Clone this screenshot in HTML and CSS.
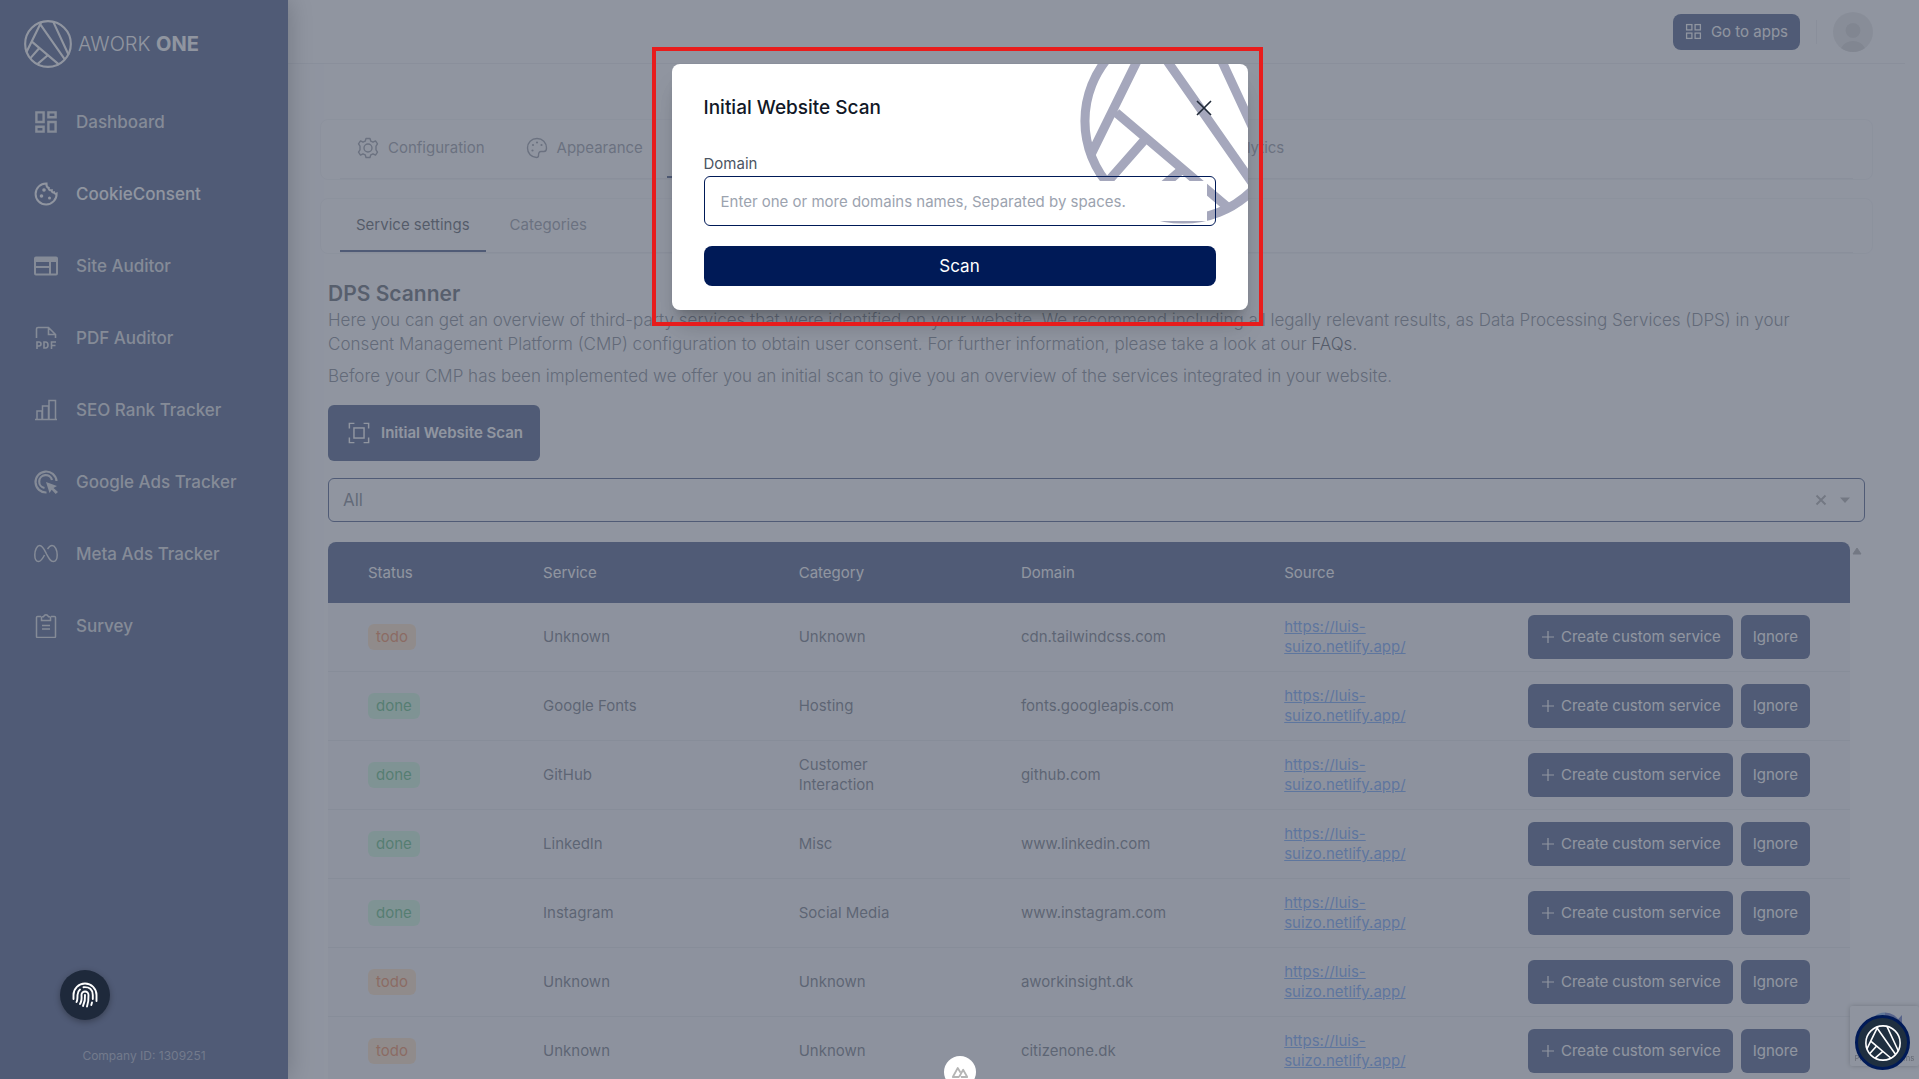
FILE: index.html
```html
<!DOCTYPE html>
<html lang="en">
<head>
  <meta charset="utf-8">
  <title>Awork One - DPS Scanner</title>
  <meta name="viewport" content="width=device-width, initial-scale=1">
  <link rel="stylesheet" href="styles.css">
</head>
<body>
  <!-- shared shapes -->
  <svg class="sprite" aria-hidden="true">
    <symbol id="logo" viewBox="0 0 100 100">
      <g fill="none" stroke="currentColor" stroke-width="4.400">
        <circle cx="50" cy="50" r="47.600"/>
        <path d="M36 4L5 67M34 9l51 73M61 4l32 69M17.600 46L73 93M31.500 59L13 80M49.500 73.500L28 92"/>
      </g>
    </symbol>
    <symbol id="plus" viewBox="0 0 16 16">
      <path d="M8 2v12M2 8h12" fill="none" stroke="currentColor" stroke-width="1.200"/>
    </symbol>
  </svg>

  <div class="layout">
    <aside class="sidebar">
      <a class="brand" href="#">
        <svg class="brand-logo"><use href="#logo"/></svg>
        <span>AWORK <b>ONE</b></span>
      </a>
      <nav class="menu">
        <a href="#">
          <svg viewBox="2 2 20 20"><path fill="currentColor" d="M19 5v2h-4V5h4M9 5v6H5V5h4m10 8v6h-4v-6h4M9 17v2H5v-2h4M21 3h-8v6h8V3zM11 3H3v10h8V3zm10 8h-8v10h8V11zm-10 4H3v6h8v-6z"/></svg>
          Dashboard
        </a>
        <a href="#" class="active">
          <svg viewBox="0 0 24 24" fill="none" stroke="currentColor" stroke-width="2"><path d="M12.500 1.500A10.500 10.500 0 1 0 22.600 11.500c-1 .6-2.300.1-2.600-1.200-1.500.5-2.500-.5-2.200-2-2.500.3-3.300-1-3-2.300-1.500-.6-2.600-2-2.300-4.500z"/><g fill="currentColor" stroke="none"><circle cx="10" cy="8" r="1.800"/><circle cx="7.500" cy="14" r="1.800"/><circle cx="15.500" cy="16" r="1.500"/></g></svg>
          CookieConsent
        </a>
        <a href="#">
          <svg viewBox="0 0 24 24"><path fill="currentColor" fill-rule="evenodd" d="M2 2.500h20a2 2 0 0 1 2 2v15a2 2 0 0 1-2 2H2a2 2 0 0 1-2-2v-15a2 2 0 0 1 2-2zM2 8v4h13V8zm0 6v5.500h13V14zm15-6v11.500h5V8z"/></svg>
          Site Auditor
        </a>
        <a href="#">
          <svg viewBox="0 0 24 24" fill="none" stroke="currentColor" stroke-width="1.600"><path d="M2.500 12V3q0-1.500 1.500-1.500h10.500l7 7V12M14.500 1.500v7h7M3 23v-7h2q2 0 2 2t-2 2H3M10 16v6h1.500q2.500 0 2.500-3t-2.500-3zM17.500 23v-7h4.500M17.500 19.500h4"/></svg>
          PDF Auditor
        </a>
        <a href="#">
          <svg viewBox="0 0 24 24" fill="none" stroke="currentColor" stroke-width="1.500"><path d="M1 21.500h22M3 21V13h5v8M8.500 21V8h6v13M15 21V2.500h6.500V21"/></svg>
          SEO Rank Tracker
        </a>
        <a href="#">
          <svg viewBox="0 0 24 24" fill="none" stroke="currentColor" stroke-width="2.200"><path d="M12.500 22.500A10.500 10.500 0 1 1 22.500 11M10.500 18A6.500 6.500 0 1 1 18 10"/><path fill="currentColor" stroke="none" d="M12 12l11 4-3.500 2L24 22l-2.300 2-4-4.300L15.500 23z"/></svg>
          Google Ads Tracker
        </a>
        <a href="#">
          <svg viewBox="0 0 24 24" fill="none" stroke="currentColor" stroke-width="1.500"><path d="M13.500 7c1.300-2 2.700-3.500 4.500-3.500 3 0 5.200 4.500 5.200 9.500 0 4-1.700 6.500-3.900 6.500-2.800 0-4.400-3-6.800-7.500C10.300 7.500 8.700 3.500 5.800 3.500 3 3.500.8 8 .8 13c0 4 1.200 6.500 3.700 6.500 2.600 0 4-2.500 6-6.500"/></svg>
          Meta Ads Tracker
        </a>
        <a href="#">
          <svg viewBox="0 0 24 24" fill="none" stroke="currentColor" stroke-width="1.500"><path d="M7 2.500H3.500Q2.500 2.500 2.500 3.500v19q0 1 1 1h17q1 0 1-1v-19q0-1-1-1H17M7.500 6.500V3.500q0-.8 1-.8h1Q10.500.8 12 .8t2.500 1.900h1q1 0 1 .8v3zM8 11.500h8M8 15h8"/></svg>
          Survey
        </a>
      </nav>
      <p class="company">Company ID: 1309251</p>
    </aside>

    <div class="page">
      <header class="topbar">
        <button type="button" class="btn apps">
          <svg viewBox="0 0 16 16" fill="none" stroke="currentColor" stroke-width="1.200"><rect x="1.500" y="1.500" width="5" height="5"/><rect x="9.500" y="1.500" width="5" height="5"/><rect x="1.500" y="9.500" width="5" height="5"/><rect x="9.500" y="9.500" width="5" height="5"/></svg>
          Go to apps
        </button>
        <span class="divider"></span>
        <svg class="avatar" viewBox="0 0 40 40"><circle cx="20" cy="20" r="20" fill="#e0e0e0"/><circle cx="20" cy="18.500" r="7.500" fill="#c2c2c2"/><path d="M8 36q4-7 12-7t12 7a20 20 0 0 1-24 0z" fill="#c2c2c2"/></svg>
      </header>

      <main class="content">
        <nav class="card tabs-main">
          <div class="tabs">
            <a href="#">
              <svg viewBox="0 0 24 24" fill="none" stroke="currentColor" stroke-width="1.400"><circle cx="12" cy="12" r="4"/><path d="M10 2.500h4l.8 2.700 2.200 1 2.500-1.300 2 3-1.500 2.300v3.600l1.500 2.300-2 3-2.500-1.300-2.200 1-.8 2.700h-4l-.8-2.700-2.200-1-2.500 1.300-2-3L4 13.800v-3.600L2.500 7.900l2-3L7 6.200l2.200-1z" stroke-linejoin="round"/></svg>
              Configuration
            </a>
            <a href="#">
              <svg viewBox="0 0 24 24" fill="none" stroke="currentColor" stroke-width="1.400"><path d="M12 2.500C6.500 2.500 2.500 6.500 2.500 12s4 9.500 9 9.500c1.500 0 2-1 2-2 0-1.500 0-4 2.500-4h3c1.700 0 2.500-1.500 2.500-3.500 0-5.500-4-9.500-9.500-9.500z"/><g fill="currentColor" stroke="none"><circle cx="8" cy="9" r="1.100"/><circle cx="12" cy="6.500" r="1.100"/><circle cx="16.500" cy="9" r="1.100"/><circle cx="7.500" cy="14.500" r="1.100"/></g></svg>
              Appearance
            </a>
            <a href="#" class="active">
              <svg viewBox="0 0 24 24" fill="none" stroke="currentColor" stroke-width="1.400"><rect x="3" y="3" width="18" height="18" rx="2"/></svg>
              Service Settings
            </a>
            <a href="#">
              <svg viewBox="0 0 24 24" fill="none" stroke="currentColor" stroke-width="1.400"><path d="M8 6l-6 6 6 6M16 6l6 6-6 6"/></svg>
              Implementation
            </a>
            <a href="#">
              <svg viewBox="0 0 24 24" fill="none" stroke="currentColor" stroke-width="1.400"><circle cx="12" cy="12" r="9"/></svg>
              Contents
            </a>
            <a href="#">
              <svg viewBox="0 0 24 24" fill="none" stroke="currentColor" stroke-width="1.400"><path d="M4 20V10M12 20V4M20 20v-7"/></svg>
              Analytics
            </a>
          </div>
        </nav>

        <nav class="card tabs-sub">
          <div class="tabs">
            <a href="#" class="active">Service settings</a>
            <a href="#">Categories</a>
          </div>
        </nav>

        <section class="scanner">
          <h1>DPS Scanner</h1>
          <p>Here you can get an overview of third-party services that were identified on your website. We recommend including all legally relevant results, as Data Processing Services (DPS) in your Consent Management Platform (CMP) configuration to obtain user consent. For further information, please take a look at our <a href="#">FAQs.</a></p>
          <p>Before your CMP has been implemented we offer you an initial scan to give you an overview of the services integrated in your website.</p>

          <button type="button" class="btn scan-open">
            <svg viewBox="0 0 24 24" fill="none" stroke="currentColor" stroke-width="1.600"><path d="M1.500 7V1.500H7M17 1.500h5.500V7M22.500 17v5.500H17M7 22.500H1.500V17"/><rect x="6.500" y="6.500" width="11" height="11"/></svg>
            Initial Website Scan
          </button>

          <div class="filter">
            <select aria-label="Status filter">
              <option>All</option>
              <option>todo</option>
              <option>done</option>
            </select>
            <span class="filter-icons">
              <svg viewBox="0 0 12 12"><path d="M1.500 1.500l9 9M10.500 1.500l-9 9" stroke="currentColor" stroke-width="2"/></svg>
              <svg viewBox="0 0 12 12"><path d="M1 3.500h10L6 9z" fill="currentColor"/></svg>
            </span>
          </div>

          <div class="table-wrap">
            <table>
              <thead>
                <tr>
                  <th class="c-status">Status</th>
                  <th class="c-service">Service</th>
                  <th class="c-category">Category</th>
                  <th class="c-domain">Domain</th>
                  <th class="c-source">Source</th>
                  <th></th>
                </tr>
              </thead>
              <tbody>
                <tr>
                  <td><span class="tag todo">todo</span></td>
                  <td>Unknown</td>
                  <td>Unknown</td>
                  <td>cdn.tailwindcss.com</td>
                  <td><a href="#">https://luis-suizo.netlify.app/</a></td>
                  <td><div class="actions"><button type="button" class="btn"><svg><use href="#plus"/></svg>Create custom service</button><button type="button" class="btn">Ignore</button></div></td>
                </tr>
                <tr>
                  <td><span class="tag done">done</span></td>
                  <td>Google Fonts</td>
                  <td>Hosting</td>
                  <td>fonts.googleapis.com</td>
                  <td><a href="#">https://luis-suizo.netlify.app/</a></td>
                  <td><div class="actions"><button type="button" class="btn"><svg><use href="#plus"/></svg>Create custom service</button><button type="button" class="btn">Ignore</button></div></td>
                </tr>
                <tr>
                  <td><span class="tag done">done</span></td>
                  <td>GitHub</td>
                  <td>Customer Interaction</td>
                  <td>github.com</td>
                  <td><a href="#">https://luis-suizo.netlify.app/</a></td>
                  <td><div class="actions"><button type="button" class="btn"><svg><use href="#plus"/></svg>Create custom service</button><button type="button" class="btn">Ignore</button></div></td>
                </tr>
                <tr>
                  <td><span class="tag done">done</span></td>
                  <td>LinkedIn</td>
                  <td>Misc</td>
                  <td>www.linkedin.com</td>
                  <td><a href="#">https://luis-suizo.netlify.app/</a></td>
                  <td><div class="actions"><button type="button" class="btn"><svg><use href="#plus"/></svg>Create custom service</button><button type="button" class="btn">Ignore</button></div></td>
                </tr>
                <tr>
                  <td><span class="tag done">done</span></td>
                  <td>Instagram</td>
                  <td>Social Media</td>
                  <td>www.instagram.com</td>
                  <td><a href="#">https://luis-suizo.netlify.app/</a></td>
                  <td><div class="actions"><button type="button" class="btn"><svg><use href="#plus"/></svg>Create custom service</button><button type="button" class="btn">Ignore</button></div></td>
                </tr>
                <tr>
                  <td><span class="tag todo">todo</span></td>
                  <td>Unknown</td>
                  <td>Unknown</td>
                  <td>aworkinsight.dk</td>
                  <td><a href="#">https://luis-suizo.netlify.app/</a></td>
                  <td><div class="actions"><button type="button" class="btn"><svg><use href="#plus"/></svg>Create custom service</button><button type="button" class="btn">Ignore</button></div></td>
                </tr>
                <tr>
                  <td><span class="tag todo">todo</span></td>
                  <td>Unknown</td>
                  <td>Unknown</td>
                  <td>citizenone.dk</td>
                  <td><a href="#">https://luis-suizo.netlify.app/</a></td>
                  <td><div class="actions"><button type="button" class="btn"><svg><use href="#plus"/></svg>Create custom service</button><button type="button" class="btn">Ignore</button></div></td>
                </tr>
              </tbody>
            </table>
            <div class="scroll-track">
              <svg viewBox="0 0 10 8"><path d="M5 1l4 6H1z" fill="currentColor" stroke="currentColor" stroke-linejoin="round"/></svg>
            </div>
          </div>
        </section>
      </main>
    </div>
  </div>

  <div class="recaptcha">
    <svg viewBox="0 0 34 34" fill="none" stroke-width="7"><path d="M4 17A13 13 0 0 1 17 4" stroke="#4a90e2"/><path d="M17 4a13 13 0 0 1 12 8" stroke="#1c3aa9"/><path d="M34 3v13H22z" fill="#1c3aa9"/></svg>
    <span>Privacy - Terms</span>
  </div>

  <div class="overlay"></div>

  <!-- scan dialog -->
  <div class="modal-wrap">
    <form class="modal" role="dialog" aria-labelledby="modal-title">
      <svg class="watermark"><use href="#logo"/></svg>
      <div class="modal-head">
        <h2 id="modal-title">Initial Website Scan</h2>
        <button type="button" class="close" aria-label="Close">
          <svg viewBox="0 0 24 24"><path d="M5 5l14 14M19 5L5 19" stroke="currentColor" stroke-width="1.600"/></svg>
        </button>
      </div>
      <label for="domain">Domain</label>
      <div class="field">
        <input type="text" id="domain" name="domain" placeholder="Enter one or more domains names, Separated by spaces.">
      </div>
      <button type="submit" class="btn submit">Scan</button>
    </form>
    <div class="highlight"></div>
  </div>

  <button type="button" class="privacy" aria-label="Privacy settings">
    <svg viewBox="0 0 26 26" fill="none" stroke="currentColor" stroke-width="1.900" stroke-linecap="round"><path d="M1.500 17v-4a11.500 11.500 0 0 1 23 0v6M4.500 20q1-1.500 1-7 0-3.500 2.500-5.500M11.500 5.200q9-.7 9.300 7.800v4M8 22q2-3 1.500-9a3.500 3.500 0 0 1 7 0q.3 6-1.500 11.500M11 24q2.500-5 2-11M20 20.500l-.7 2.500"/></svg>
  </button>
  <button type="button" class="chat" aria-label="Open chat">
    <svg><use href="#logo"/></svg>
  </button>
  <button type="button" class="devtools" aria-label="Dev tools">
    <svg viewBox="0 0 20 14" fill="none" stroke="currentColor" stroke-width="2" stroke-linejoin="round"><path d="M9 12H2L7.500 2l3 5M11 12h7l-4.500-8L9 12"/></svg>
  </button>
</body>
</html>
```
FILE: styles.css
```css
* { box-sizing:border-box }
body {
  margin:0;
  height:100vh;
  overflow:hidden;
  font-family:Inter, "Open Sans", sans-serif;
  font-size:15px;
  line-height:20px;
  color:#374151;
  background:#fdfdfe
}
a { color:inherit; text-decoration:none }
h1, h2, p { margin:0 }
button { font:inherit; cursor:pointer; padding:0; border:0; background:none }
svg { display:block; flex:none }
.sprite { position:absolute; width:0; height:0 }

.btn {
  display:flex;
  align-items:center;
  justify-content:center;
  color:#fff;
  background:#001a57;
  border-radius:6px;
  white-space:nowrap
}
.layout { display:flex; height:100vh }

/* sidebar */
.sidebar {
  position:relative; /* keeps the shadow over the top bar */
  display:flex;
  flex-direction:column;
  width:288px;
  flex:none;
  color:#fff;
  background:#001a57;
  box-shadow:0 0 24px rgba(0,0,0,0.5)
}
.brand {
  display:flex;
  align-items:center;
  gap:6px;
  padding:20px 24px 0;
  font-size:20px;
  font-weight:300
}
.brand b { font-weight:700 }
.brand-logo { width:48px; height:48px }
.menu { display:flex; flex-direction:column; padding:18px 34px 0 }
.menu a {
  display:flex;
  align-items:center;
  gap:18px;
  height:72px;
  font-size:17px;
  font-weight:500;
  color:#d1d5db
}
.menu a.active { color:#fff }
.menu svg { width:24px; height:24px }
.company {
  margin-top:auto;
  padding-bottom:13px;
  font-size:12px;
  text-align:center;
  color:#8b95b0
}

/* page */
.page { flex:1; min-width:0; margin-right:14px }
.topbar {
  display:flex;
  align-items:center;
  justify-content:flex-end;
  height:64px;
  padding-right:32px;
  background:#fff;
  border-bottom:1px solid #e5e7eb
}
.apps { height:36px; padding:0 12px; gap:9px; border-radius:8px }
.apps svg { width:17px; height:17px }
.divider { width:1px; height:24px; margin:0 16px; background:#e5e7eb }
.avatar { width:40px; height:40px }

.content { padding:55px 32px 0 }
.card {
  padding:0 19px;
  background:#fff;
  border:1px solid #f0f1f4;
  border-radius:8px
}
.tabs { display:flex; gap:8px; border-bottom:1px solid #e5e7eb }
.tabs a {
  display:flex;
  align-items:center;
  gap:8px;
  padding:0 16px;
  white-space:nowrap;
  color:#6b7280;
  border-bottom:2px solid transparent
}
.tabs a.active { color:#111827; border-color:#001a57 }
.tabs svg { width:24px; height:24px }
.tabs-main { margin-bottom:18px }
.tabs-main a { height:58px }
.tabs-sub a { height:53px }

/* scanner */
.scanner { padding:26px 8px 0 }
.scanner h1 { font-size:21px; line-height:28px; font-weight:600; color:#1f2937 }
.scanner p {
  margin-bottom:8px;
  padding-right:64px;
  font-size:17px;
  font-weight:300;
  line-height:24px;
  color:#4b5563
}
.scanner p a { color:#111827 }
.scan-open { height:56px; margin-top:17px; padding:0 17px 0 20px; gap:11px; font-weight:600 }
.scan-open svg { width:22px; height:22px }

.filter { position:relative; margin:17px 0 20px }
.filter select {
  display:block;
  width:100%;
  height:44px;
  padding:0 14px;
  font:inherit;
  font-size:17px;
  color:#4b5563;
  background:#fff;
  border:1px solid #001a57;
  border-radius:6px;
  appearance:none
}
.filter-icons {
  position:absolute;
  right:14px;
  top:16px;
  display:flex;
  gap:12px;
  color:#8c8c8c;
  pointer-events:none
}
.filter-icons svg { width:12px; height:12px }

.table-wrap { display:flex }
.scroll-track { width:15px; flex:none; padding:5px 2px; color:#8c8c8c }
.scroll-track svg { width:10px; height:8px }
table { width:100%; table-layout:fixed; border-collapse:separate; border-spacing:0 }
th {
  height:61px;
  padding:0 0 0 40px;
  font-weight:400;
  text-align:left;
  color:#fff;
  background:#001a57
}
th:first-child { border-top-left-radius:8px }
th:last-child { border-top-right-radius:8px }
.c-status { width:11.500% }
.c-service { width:16.800% }
.c-category { width:14.600% }
.c-domain { width:17.300% }
.c-source { width:16.100% }
td {
  height:69px;
  padding:0 40px;
  background:#f3f4f6;
  border-bottom:1px solid #dcdee4
}
td a { color:#3b82f6; text-decoration:underline }
.tag { display:inline-block; padding:3px 8px; border-radius:6px }
.todo { color:#ea580c; background:#fed7aa }
.done { color:#16a34a; background:#bbf7d0 }
.actions { display:flex; justify-content:flex-end; gap:8px }
.actions .btn { height:44px; padding:0 12px; gap:5px }
.actions svg { width:16px; height:16px }

.recaptcha {
  position:fixed;
  right:0;
  bottom:13px;
  display:flex;
  flex-direction:column;
  align-items:center;
  width:69px;
  height:60px;
  padding-top:6px;
  font-size:8px;
  line-height:24px;
  color:#555;
  white-space:nowrap;
  background:#f9f9f9;
  border-radius:2px;
  box-shadow:0 0 5px gray
}
.recaptcha svg { width:34px; height:34px }

/* dialog */
.overlay { position:fixed; inset:0; background:rgba(107,114,128,0.75) }
.modal-wrap {
  position:fixed;
  top:64px;
  left:0;
  right:0;
  width:576px;
  margin:0 auto;
  border-radius:8px;
  box-shadow:0 20px 25px -5px rgba(0,0,0,0.2), 0 8px 10px -6px rgba(0,0,0,0.2)
}
.modal {
  position:relative;
  padding:32px 32px 24px;
  background:#fff;
  border-radius:8px;
  overflow:hidden
}
.watermark {
  position:absolute;
  top:-46px;
  right:-38px;
  width:206px;
  height:206px;
  color:#1e2557;
  opacity:0.4
}
.modal-head, .modal label, .field, .submit { position:relative }
.modal-head { display:flex; align-items:center; justify-content:space-between; height:24px }
.modal h2 { font-size:19px; font-weight:500; color:#111827 }
.close { color:#1f2937 }
.close svg { width:24px; height:24px }
.modal label { display:block; margin:34px 0 2px; color:#4b5563 }
.field {
  height:50px;
  padding:4px 8px;
  border:1px solid #001a57;
  border-radius:6px
}
.field input {
  display:block;
  width:100%;
  height:40px;
  padding:0 8px;
  font:inherit;
  background:#fff;
  border:0;
  outline:0
}
.field input::placeholder { color:#9ca3af; opacity:1 }
.submit { width:100%; height:40px; margin-top:20px; font-size:17px; border-radius:8px }
.highlight {
  position:absolute;
  inset:-17px -15px -16px -20px;
  border:4px solid #e81c1c;
  pointer-events:none
}

/* floating buttons */
.privacy, .chat, .devtools {
  position:fixed;
  display:flex;
  align-items:center;
  justify-content:center;
  border-radius:50%
}
.privacy {
  left:60px;
  bottom:59px;
  width:50px;
  height:50px;
  color:#fff;
  background:#1e293b;
  box-shadow:0 2px 6px rgba(0,0,0,0.3)
}
.privacy svg { width:26px; height:26px }
.chat {
  right:9px;
  bottom:9px;
  width:55px;
  height:55px;
  color:#fff;
  background:#1f2f40;
  border:3px solid #001a57
}
.chat svg { width:36px; height:36px }
.devtools {
  left:0;
  right:0;
  bottom:-9px;
  width:32px;
  height:32px;
  margin:0 auto;
  color:#b5b5b5;
  background:#fff
}
.devtools svg { width:18px; height:13px }
```
